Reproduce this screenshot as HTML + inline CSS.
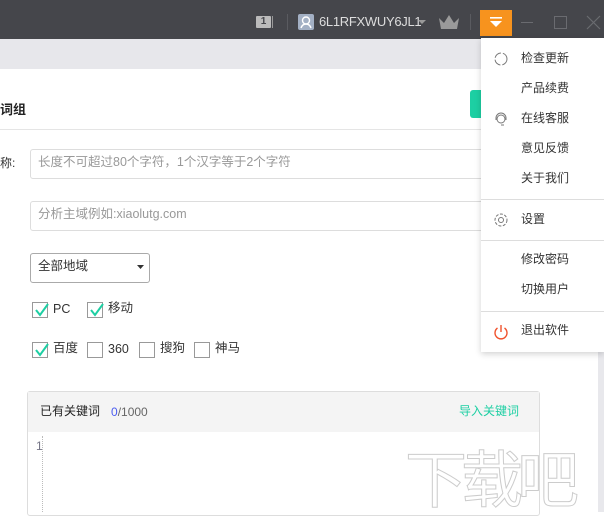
<!DOCTYPE html>
<html><head><meta charset="utf-8"><style>
*{margin:0;padding:0;box-sizing:border-box}
body{width:604px;height:512px;overflow:hidden;position:relative;background:#fff;font-family:"Liberation Sans","Noto Sans CJK SC",sans-serif;font-size:12px;color:#333;line-height:1.2}
.a{position:absolute}
.top{left:0;top:0;width:604px;height:39px;background:#45464b}
.sub{left:0;top:39px;width:604px;height:30px;background:#e7e7eb}
.inp{border:1px solid #ddd;border-radius:3px;height:30px;color:#999;padding:5px 7px;font-size:12.5px}
.cb{width:16px;height:16px;border:1px solid #999;background:#fff}
.cb svg{position:absolute;left:1px;top:-1px}
.mi{left:521px;font-size:12px;color:#333}
</style></head><body>
<div class="a top"></div>
<div class="a" style="left:256px;top:16px;width:15px;height:12px;background:#bbb;border-radius:1px;color:#45464b;font-size:10px;line-height:12px;text-align:center;font-weight:bold">1</div>
<div class="a" style="left:272px;top:16px;width:1px;height:12px;background:#999"></div>
<div class="a" style="left:287px;top:14px;width:1px;height:16px;background:#5a5b60"></div>
<div class="a" style="left:298px;top:14px;width:16px;height:16px;background:#a3b0c4;border-radius:2px"></div>
<svg class="a" style="left:298px;top:14px" width="16" height="16"><circle cx="8" cy="6.5" r="3.5" fill="none" stroke="#fff" stroke-width="1.4"/><path d="M3 14c1-3 3-4 5-4s4 1 5 4" fill="none" stroke="#fff" stroke-width="1.4"/></svg>
<div class="a" style="left:319px;top:14px;color:#ddd;font-size:13px;letter-spacing:-0.3px">6L1RFXWUY6JL1</div>
<svg class="a" style="left:417px;top:19px" width="10" height="6"><path d="M1 1h8L5 5z" fill="#999"/></svg>
<svg class="a" style="left:438px;top:14px" width="22" height="16"><path d="M1 4l5 5 5-8 5 8 5-5-2 11H3z" fill="#9a9a9a"/></svg>
<div class="a" style="left:470px;top:14px;width:1px;height:16px;background:#5a5b60"></div>
<div class="a" style="left:480px;top:10px;width:32px;height:26px;background:#f7931e"></div>
<svg class="a" style="left:488px;top:15px" width="16" height="14"><rect x="2" y="2" width="12" height="1.6" fill="#fff"/><path d="M2 6h12l-6 6z" fill="#fff"/></svg>
<div class="a" style="left:521px;top:22px;width:12px;height:1px;background:#6a6b70"></div>
<div class="a" style="left:554px;top:16px;width:13px;height:13px;border:1px solid #6a6b70"></div>
<svg class="a" style="left:586px;top:15px" width="15" height="15"><path d="M1 1l13 13M14 1L1 14" stroke="#6a6b70" stroke-width="1.2"/></svg>
<div class="a sub"></div>
<div class="a" style="left:598px;top:69px;width:6px;height:443px;background:#e8e8ec"></div>
<div class="a" style="left:0;top:102px;font-size:13px;font-weight:bold;color:#222">词组</div>
<div class="a" style="left:0;top:129px;width:598px;height:1px;background:#e5e5e5"></div>
<div class="a" style="left:470px;top:90px;width:20px;height:28px;background:#1dcfa3;border-radius:3px"></div>
<div class="a" style="left:0;top:156px;font-size:12px;color:#333">称:</div>
<div class="a inp" style="left:30px;top:149px;width:480px">长度不可超过80个字符，1个汉字等于2个字符</div>
<div class="a inp" style="left:30px;top:201px;width:480px">分析主域例如:xiaolutg.com</div>
<div class="a" style="left:30px;top:253px;width:120px;height:30px;border:1px solid #aaa;border-radius:3px;padding:5px 7px;font-size:12.5px;color:#333">全部地域</div>
<svg class="a" style="left:137px;top:265px" width="7" height="5"><path d="M0 0h7L3.5 4z" fill="#333"/></svg>
<div class="a cb" style="left:32px;top:302px"><svg width="16" height="16"><path d="M2 8l4 5 8-11" fill="none" stroke="#1dcfa3" stroke-width="2"/></svg></div>
<div class="a" style="left:53px;top:302px;font-size:12.5px">PC</div>
<div class="a cb" style="left:87px;top:302px"><svg width="16" height="16"><path d="M2 8l4 5 8-11" fill="none" stroke="#1dcfa3" stroke-width="2"/></svg></div>
<div class="a" style="left:108px;top:301px;font-size:12.5px">移动</div>
<div class="a cb" style="left:32px;top:342px"><svg width="16" height="16"><path d="M2 8l4 5 8-11" fill="none" stroke="#1dcfa3" stroke-width="2"/></svg></div>
<div class="a" style="left:53px;top:341px;font-size:12.5px">百度</div>
<div class="a cb" style="left:87px;top:342px"></div>
<div class="a" style="left:108px;top:342px;font-size:12.5px">360</div>
<div class="a cb" style="left:139px;top:342px"></div>
<div class="a" style="left:160px;top:341px;font-size:12.5px">搜狗</div>
<div class="a cb" style="left:194px;top:342px"></div>
<div class="a" style="left:215px;top:341px;font-size:12.5px">神马</div>
<div class="a" style="left:27px;top:391px;width:513px;height:125px;border:1px solid #ddd;border-radius:3px;background:#fff"></div>
<div class="a" style="left:28px;top:392px;width:511px;height:40px;background:#f4f4f4"></div>
<div class="a" style="left:40px;top:404px;color:#222">已有关键词</div>
<div class="a" style="left:111px;top:405px;color:#666"><span style="color:#4a5cf0">0</span>/1000</div>
<div class="a" style="left:459px;top:404px;color:#1dcfa3">导入关键词</div>
<div class="a" style="left:36px;top:439px;color:#778">1</div>
<div class="a" style="left:42px;top:436px;width:1px;height:76px;border-left:1px dotted #bbb"></div>
<div class="a" style="left:405px;top:440px;font-size:62px;white-space:nowrap;color:#fff;-webkit-text-stroke:1px #ccc;letter-spacing:-6px;font-family:'Noto Sans CJK SC',sans-serif;line-height:70px">下载吧</div>
<div class="a" style="left:481px;top:38px;width:123px;height:314px;background:#fff;box-shadow:0 2px 6px rgba(0,0,0,.18)"></div>
<svg class="a" style="left:493px;top:51px" width="16" height="16"><circle cx="8" cy="8" r="6" fill="none" stroke="#777" stroke-dasharray="8 2"/></svg>
<div class="a mi" style="top:51px">检查更新</div>
<div class="a mi" style="top:81px">产品续费</div>
<svg class="a" style="left:493px;top:111px" width="16" height="16"><path d="M3 9V7a5 5 0 0110 0v2M8 14h3" fill="none" stroke="#777"/><circle cx="8" cy="8" r="4" fill="none" stroke="#777"/></svg>
<div class="a mi" style="top:111px">在线客服</div>
<div class="a mi" style="top:141px">意见反馈</div>
<div class="a mi" style="top:171px">关于我们</div>
<div class="a" style="left:481px;top:199px;width:123px;height:1px;background:#ddd"></div>
<svg class="a" style="left:493px;top:212px" width="16" height="16"><circle cx="8" cy="8" r="6" fill="none" stroke="#777" stroke-dasharray="3 1.5"/><circle cx="8" cy="8" r="2.5" fill="none" stroke="#777"/></svg>
<div class="a mi" style="top:212px">设置</div>
<div class="a" style="left:481px;top:240px;width:123px;height:1px;background:#ddd"></div>
<div class="a mi" style="top:252px">修改密码</div>
<div class="a mi" style="top:282px">切换用户</div>
<div class="a" style="left:481px;top:311px;width:123px;height:1px;background:#ddd"></div>
<svg class="a" style="left:493px;top:324px" width="16" height="16"><path d="M4.5 4a6 6 0 107 0" fill="none" stroke="#f0522d" stroke-width="1.4"/><path d="M8 1v7" stroke="#f0522d" stroke-width="1.4"/></svg>
<div class="a mi" style="top:323px">退出软件</div>
</body></html>
